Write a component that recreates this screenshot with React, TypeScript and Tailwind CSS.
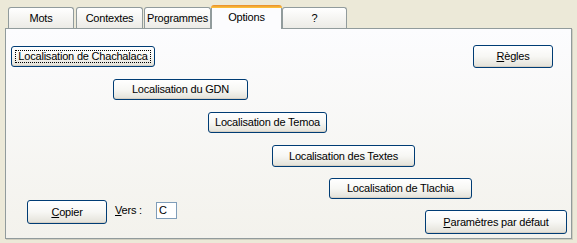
import React from "react"

const font = "font-['Liberation_Sans',Arial,sans-serif] text-[11px] leading-none tracking-[-0.2px] text-black"

function XpButton({
  children,
  className = "",
  focused = false,
}: {
  children: React.ReactNode
  className?: string
  focused?: boolean
}) {
  return (
    <button
      className={`relative flex items-center justify-center rounded-[3px] border border-[#003C74] bg-linear-to-b from-white via-[#F7F7F4] to-[#E3E1D8] shadow-[inset_0_-1px_0_#D6D0C5] ${font} ${className}`}
    >
      {focused && (
        <span className="pointer-events-none absolute inset-[3px] border border-dotted border-black" />
      )}
      <span className="relative">{children}</span>
    </button>
  )
}

const tabs = [
  { label: "Mots", w: "w-[66px]", ml: "ml-[3px]" },
  { label: "Contextes", w: "w-[67px]", ml: "ml-[2px]" },
  { label: "Programmes", w: "w-[67px]", ml: "ml-[1px]" },
  { label: "Options", w: "w-[71px]", ml: "ml-0", active: true },
  { label: "?", w: "w-[65px]", ml: "ml-0" },
]

export default function App() {
  return (
    <div className="h-[243px] w-[577px] bg-[#ECE9D8] px-[5px] pt-[4px]">
      {/* Tab strip */}
      <div className="flex h-[24px] items-end">
        {tabs.map((t) =>
          t.active ? (
            <div
              key={t.label}
              className={`relative z-10 -mb-px flex h-[24px] flex-col ${t.w} ${t.ml}`}
            >
              <div className="h-[3px] rounded-t-[3px] bg-linear-to-b from-[#E68B2C] to-[#FFC73C]" />
              <div className="flex flex-1 items-start justify-center border-x border-[#919B9C] bg-[#FCFCFE] pt-[4px]">
                <span className={font}>{t.label}</span>
              </div>
            </div>
          ) : (
            <div
              key={t.label}
              className={`flex h-[21px] items-start justify-center rounded-t-[3px] border border-b-0 border-[#919B9C] bg-linear-to-b from-white to-[#ECEBE6] pt-[5px] ${t.w} ${t.ml}`}
            >
              <span className={font}>{t.label}</span>
            </div>
          )
        )}
      </div>

      {/* Panel */}
      <div className="flex h-[211px] w-[567px] flex-col border border-[#919B9C] bg-linear-to-b from-[#FCFCFE] to-[#F3F2EC] shadow-[1px_1px_0_#D0CEBF]">
        <div className="mt-[16px] flex items-start">
          <XpButton focused className="mt-px ml-[5px] h-[21px] w-[144px]">
            Localisation de Chachalaca
          </XpButton>
          <XpButton className="ml-auto mr-[18px] h-[23px] w-[80px]">
            <span className="underline">R</span>ègles
          </XpButton>
        </div>
        <XpButton className="mt-[11px] ml-[107px] h-[21px] w-[135px]">
          Localisation du GDN
        </XpButton>
        <XpButton className="mt-[12px] ml-[202px] h-[21px] w-[119px]">
          Localisation de Temoa
        </XpButton>
        <XpButton className="mt-[12px] ml-[266px] h-[22px] w-[143px]">
          Localisation des Textes
        </XpButton>
        <XpButton className="mt-[11px] ml-[323px] h-[21px] w-[143px]">
          Localisation de Tlachia
        </XpButton>
        <div className="mt-px flex items-start">
          <XpButton className="ml-[21px] h-[24px] w-[80px]">
            <span className="underline">C</span>opier
          </XpButton>
          <span className={`ml-[8px] mt-[5px] ${font}`}>
            <span className="underline">V</span>ers :
          </span>
          <div
            className={`ml-[14px] mt-[2px] flex h-[17px] w-[21px] items-center border border-[#7F9DB9] bg-white pl-[2px] ${font}`}
          >
            C
          </div>
          <XpButton className="ml-auto mr-[4px] mt-[10px] h-[24px] w-[142px]">
            <span className="underline">P</span>aramètres par défaut
          </XpButton>
        </div>
      </div>
    </div>
  )
}
